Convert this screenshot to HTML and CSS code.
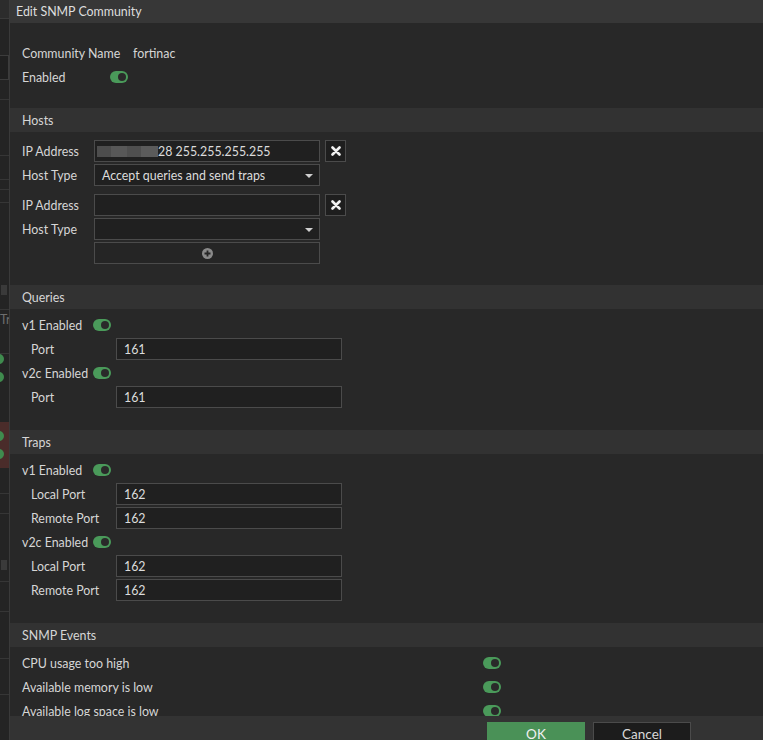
FILE: index.html
```html
<!DOCTYPE html>
<html>

<head>
    <meta charset="utf-8">
    <link rel="stylesheet" href="styles.css">
</head>

<body>
    <div class="page">
        <div class="backdrop">
            <div class="bd-bar"></div>
            <div class="bd-gap h36"></div>
            <div class="bd-field"></div>
            <div class="bd-gap h20 line"></div>
            <div class="bd-gap h56 line"></div>
            <div class="bd-gap h24 line"></div>
            <div class="bd-gap h10 line"></div>
            <div class="bd-gap h13 line"></div>
            <div class="bd-gap h80"></div>
            <div class="bd-gap h14 icon"></div>
            <div class="bd-gap h13 line"></div>
            <div class="bd-text">Tra</div>
            <div class="bd-gap h24 line"></div>
            <div class="bd-dot"></div>
            <div class="bd-gap h8"></div>
            <div class="bd-dot"></div>
            <div class="bd-gap h40"></div>
            <div class="bd-alert">
                <div class="bd-dot"></div>
                <div class="bd-dot"></div>
            </div>
            <div class="bd-gap h26 line"></div>
            <div class="bd-gap h20 line"></div>
            <div class="bd-gap h44"></div>
            <div class="bd-gap h12 icon"></div>
            <div class="bd-gap h12 line"></div>
            <div class="bd-gap h30 line"></div>
            <div class="bd-gap h47 line"></div>
            <div class="bd-gap h36 line"></div>
        </div>

        <div class="dialog">
            <div class="dialog-title">Edit SNMP Community</div>

            <div class="dialog-body">
                <div class="section first">
                    <div class="row">
                        <span class="label w-name">Community Name</span>
                        <span class="value">fortinac</span>
                    </div>
                    <div class="row">
                        <span class="label w-enabled">Enabled</span>
                        <span class="toggle"></span>
                    </div>
                </div>

                <div class="band">Hosts</div>
                <div class="section hosts">
                    <div class="host">
                        <div class="row">
                            <span class="label w-host">IP Address</span>
                            <div class="input"><span class="redacted"></span>28 255.255.255.255</div>
                            <span class="remove">
                                <svg width="10" height="10" viewBox="0 0 10 10"><path d="M1.5 1.5 L8.5 8.5 M8.5 1.5 L1.5 8.5" stroke="#f2f2f2" stroke-width="2.6" stroke-linecap="round"/></svg>
                            </span>
                        </div>
                        <div class="row">
                            <span class="label w-host">Host Type</span>
                            <div class="input select">Accept queries and send traps</div>
                        </div>
                    </div>
                    <div class="host">
                        <div class="row">
                            <span class="label w-host">IP Address</span>
                            <div class="input"></div>
                            <span class="remove">
                                <svg width="10" height="10" viewBox="0 0 10 10"><path d="M1.5 1.5 L8.5 8.5 M8.5 1.5 L1.5 8.5" stroke="#f2f2f2" stroke-width="2.6" stroke-linecap="round"/></svg>
                            </span>
                        </div>
                        <div class="row">
                            <span class="label w-host">Host Type</span>
                            <div class="input select"></div>
                        </div>
                        <div class="row">
                            <span class="label w-host"></span>
                            <div class="input add">
                                <svg width="11" height="11" viewBox="0 0 11 11"><circle cx="5.5" cy="5.5" r="5.5" fill="#8a8a8a"/><path d="M5.5 2.5 V8.5 M2.5 5.5 H8.5" stroke="#262626" stroke-width="1.8"/></svg>
                            </div>
                        </div>
                    </div>
                </div>

                <div class="band">Queries</div>
                <div class="section">
                    <div class="row">
                        <span class="label w-ver">v1 Enabled</span>
                        <span class="toggle"></span>
                    </div>
                    <div class="row sub">
                        <span class="label w-port">Port</span>
                        <div class="input">161</div>
                    </div>
                    <div class="row">
                        <span class="label w-ver">v2c Enabled</span>
                        <span class="toggle"></span>
                    </div>
                    <div class="row sub">
                        <span class="label w-port">Port</span>
                        <div class="input">161</div>
                    </div>
                </div>

                <div class="band">Traps</div>
                <div class="section">
                    <div class="row">
                        <span class="label w-ver">v1 Enabled</span>
                        <span class="toggle"></span>
                    </div>
                    <div class="row sub">
                        <span class="label w-port">Local Port</span>
                        <div class="input">162</div>
                    </div>
                    <div class="row sub">
                        <span class="label w-port">Remote Port</span>
                        <div class="input">162</div>
                    </div>
                    <div class="row">
                        <span class="label w-ver">v2c Enabled</span>
                        <span class="toggle"></span>
                    </div>
                    <div class="row sub">
                        <span class="label w-port">Local Port</span>
                        <div class="input">162</div>
                    </div>
                    <div class="row sub">
                        <span class="label w-port">Remote Port</span>
                        <div class="input">162</div>
                    </div>
                </div>

                <div class="band">SNMP Events</div>
                <div class="section">
                    <div class="row">
                        <span class="label w-event">CPU usage too high</span>
                        <span class="toggle"></span>
                    </div>
                    <div class="row">
                        <span class="label w-event">Available memory is low</span>
                        <span class="toggle"></span>
                    </div>
                    <div class="row">
                        <span class="label w-event">Available log space is low</span>
                        <span class="toggle"></span>
                    </div>
                </div>
            </div>

            <div class="dialog-footer">
                <button class="btn ok">OK</button>
                <button class="btn cancel">Cancel</button>
            </div>
        </div>
    </div>
</body>

</html>
```

FILE: styles.css
```css
* {
    box-sizing: border-box;
}

body {
    margin: 0;
    background-color: #1f1f1f;
    font-family: Lato, "Open Sans", sans-serif;
    font-size: 12.4px;
    color: #d6d6d6;
}

.page {
    display: flex;
    height: 740px;
    overflow: hidden;
}

/* page behind the dialog */
.backdrop {
    width: 9px;
    flex: none;
    display: flex;
    flex-direction: column;
    background-color: #242424;
    overflow: hidden;
}

.bd-bar {
    height: 19px;
    flex: none;
    background-color: #2c2c2c;
    border-bottom: 1px solid #3a3a3a;
}

.bd-field {
    height: 25px;
    flex: none;
    border: 1px solid #3c3c3c;
    border-left: none;
    background-color: #202020;
}

.bd-gap {
    flex: none;
}

.bd-gap.line {
    border-bottom: 1px solid #363636;
}

.bd-gap.icon {
    background: linear-gradient(#242424 2px, #3a3a3a 2px, #3a3a3a 12px, #242424 12px) no-repeat 1px 0 / 6px 100%;
}

.h8 { height: 8px; }
.h10 { height: 10px; }
.h12 { height: 12px; }
.h13 { height: 13px; }
.h14 { height: 14px; }
.h20 { height: 20px; }
.h24 { height: 24px; }
.h26 { height: 26px; }
.h30 { height: 30px; }
.h36 { height: 36px; }
.h40 { height: 40px; }
.h44 { height: 44px; }
.h47 { height: 47px; }
.h56 { height: 56px; }
.h80 { height: 80px; }

.bd-text {
    height: 20px;
    flex: none;
    line-height: 20px;
    color: #6e6e6e;
    white-space: nowrap;
}

.bd-dot {
    width: 10px;
    height: 10px;
    flex: none;
    margin-left: -6px;
    border-radius: 50%;
    background-color: #3f8b4e;
}

.bd-alert {
    height: 46px;
    flex: none;
    display: flex;
    flex-direction: column;
    justify-content: center;
    gap: 8px;
    background-color: #4a2c2a;
}

/* dialog */
.dialog {
    flex: 1;
    min-width: 0;
    display: flex;
    flex-direction: column;
    background-color: #282828;
    border-left: 1px solid #3a3a3a;
}

.dialog-title {
    height: 23px;
    flex: none;
    line-height: 24px;
    padding-left: 6px;
    background-color: #373737;
    color: #dedede;
    overflow: hidden;
}

.dialog-body {
    flex: 1;
    overflow: hidden;
}

.band {
    height: 24px;
    line-height: 26px;
    padding-left: 12px;
    background-color: #323232;
    overflow: hidden;
}

.section {
    padding: 4px 12px 21px;
}

.section.first {
    padding-top: 18px;
    padding-bottom: 19px;
}

.section.hosts {
    padding-top: 7px;
    padding-bottom: 20px;
}

.host + .host {
    margin-top: 6px;
}

.row {
    display: flex;
    align-items: center;
    height: 24px;
}

.row.sub {
    padding-left: 9px;
}

.label {
    flex: none;
    white-space: nowrap;
}

.w-name { width: 111px; }
.w-enabled { width: 88px; }
.w-host { width: 72px; }
.w-ver { width: 71px; }
.w-port { width: 85px; }
.w-event { width: 461px; }

.toggle {
    position: relative;
    width: 18px;
    height: 12px;
    border-radius: 6px;
    background-color: #4a9a5a;
}

.toggle::after {
    content: "";
    position: absolute;
    top: 2px;
    right: 2px;
    width: 8px;
    height: 8px;
    border-radius: 50%;
    background-color: #2a2a2a;
}

.input {
    position: relative;
    width: 226px;
    height: 22px;
    line-height: 20px;
    padding-left: 7px;
    padding-top: 1px;
    background-color: #202020;
    border: 1px solid #4b4b4b;
    color: #dcdcdc;
    white-space: nowrap;
    display: flex;
    align-items: center;
}

.input.select::after {
    content: "";
    position: absolute;
    right: 6px;
    top: 9px;
    border-left: 4px solid transparent;
    border-right: 4px solid transparent;
    border-top: 4px solid #cfcfcf;
}

.input.add {
    justify-content: center;
    padding: 0;
    background-color: #252525;
}

.redacted {
    width: 61px;
    height: 11px;
    margin-left: -5px;
    background: linear-gradient(90deg, #4d4d4d 0, #4d4d4d 14px, #585858 14px, #585858 30px, #4f4f4f 30px, #4f4f4f 44px, #5b5b5b 44px);
}

.remove {
    width: 21px;
    height: 22px;
    margin-left: 5px;
    display: flex;
    align-items: center;
    justify-content: center;
    background-color: #1e1e1e;
    border: 1px solid #4b4b4b;
}

.dialog-footer {
    height: 24px;
    flex: none;
    display: flex;
    justify-content: flex-end;
    gap: 8px;
    padding-right: 72px;
    padding-top: 6px;
    background-color: #333333;
    overflow: hidden;
}

.btn {
    width: 98px;
    height: 24px;
    flex: none;
    font-family: Lato, "Open Sans", sans-serif;
    font-size: 13.5px;
    line-height: 22px;
    padding: 0;
    border: 1px solid #4b4b4b;
    color: #d8d8d8;
}

.btn.ok {
    background-color: #4a9157;
    border-color: #4a9157;
    color: #f0f0f0;
}

.btn.cancel {
    background-color: #1c1c1c;
}
```
